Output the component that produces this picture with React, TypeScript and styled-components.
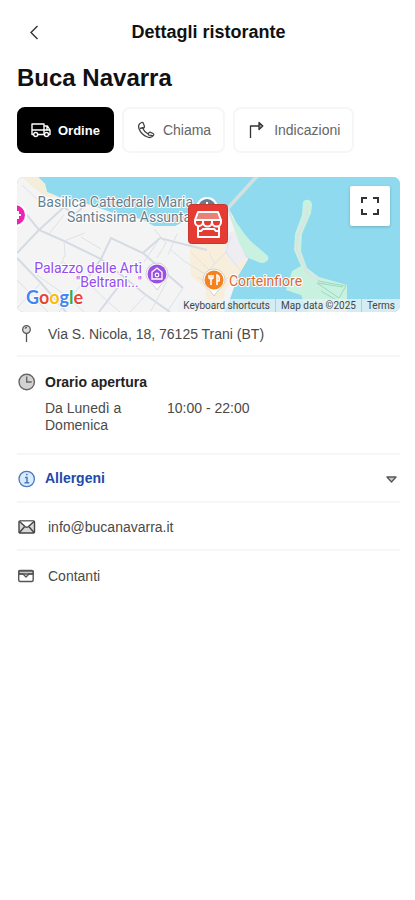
import React from "react";
import styled, { createGlobalStyle } from "styled-components";

const GlobalStyle = createGlobalStyle`
  *, *::before, *::after { box-sizing: border-box; }
  body {
    margin: 0;
    background: #fff;
    color: #4a4a4a;
    font-family: "Liberation Sans", Arial, sans-serif;
    font-size: 14px;
    line-height: 17px;
  }
  button { font: inherit; color: inherit; cursor: pointer; }
  a { color: inherit; text-decoration: none; }
`;

const Page = styled.main`
  padding: 0 15px 32px 17px;
`;

const TopBar = styled.header`
  display: grid;
  grid-template-columns: 34px 1fr 34px;
  align-items: center;
  height: 64px;
`;

const BackButton = styled.button`
  display: flex;
  align-items: center;
  justify-content: center;
  height: 34px;
  padding: 0;
  border: 0;
  background: none;
`;

const ScreenTitle = styled.h1`
  margin: 0;
  color: #111;
  font-size: 18px;
  line-height: 24px;
  text-align: center;
`;

const RestaurantName = styled.h2`
  margin: 0;
  color: #111;
  font-size: 24px;
  line-height: 28px;
`;

const Actions = styled.nav`
  display: flex;
  gap: 8px;
  margin: 15px 0 24px;
`;

const ActionButton = styled.button<{ $primary?: boolean }>`
  display: flex;
  align-items: center;
  gap: 7px;
  height: 46px;
  padding: 0 12px;
  border: 2px solid ${(p) => (p.$primary ? "#000" : "#f6f6f6")};
  border-radius: 8px;
  background: ${(p) => (p.$primary ? "#000" : "#fff")};
  color: ${(p) => (p.$primary ? "#fff" : "#666")};
  font-size: ${(p) => (p.$primary ? 13 : 14)}px;
  font-weight: ${(p) => (p.$primary ? 700 : 400)};
`;

const MapFrame = styled.section`
  position: relative;
  height: 135px;
  overflow: hidden;
  border-radius: 7px;
  background: #8fdaee;
`;

const MapDrawing = styled.svg`
  display: block;
  width: 100%;
  height: 100%;
  font-family: Roboto, sans-serif;
`;

const FullscreenButton = styled.button`
  position: absolute;
  top: 9px;
  right: 10px;
  display: flex;
  align-items: center;
  justify-content: center;
  width: 40px;
  height: 40px;
  padding: 0;
  border: 0;
  border-radius: 2px;
  background: #fff;
  box-shadow: 0 1px 3px rgba(0, 0, 0, 0.2);
`;

const MapLegal = styled.div`
  position: absolute;
  right: 0;
  bottom: 0;
  display: flex;
  gap: 1px;
  color: #444;
  font-family: Roboto, sans-serif;
  font-size: 10px;
  line-height: 13px;
`;

const LegalItem = styled.span`
  padding: 0 5px;
  background: rgba(238, 243, 245, 0.72);

  button {
    padding: 0;
    border: 0;
    background: none;
  }
`;

const Row = styled.section<{ $height: number }>`
  display: grid;
  grid-template-columns: 20px 1fr auto;
  column-gap: 8px;
  align-items: center;
  height: ${(p) => p.$height}px;
  padding-top: 2px;
  border-bottom: 2px solid #f6f6f6;

  &:last-child { border-bottom: 0; }
`;

const RowText = styled.span`
  padding-left: 3px;
`;

const Hours = styled.section`
  display: grid;
  grid-template-columns: 20px 1fr;
  column-gap: 8px;
  row-gap: 8px;
  align-items: center;
  padding: 15px 0 19px;
  border-bottom: 2px solid #f6f6f6;
`;

const SectionTitle = styled.h3`
  margin: 0;
  color: #222;
  font-size: 14px;
  line-height: 17px;
`;

const HoursList = styled.dl`
  display: grid;
  grid-column: 2;
  grid-template-columns: 106px 1fr;
  column-gap: 16px;
  margin: 0;

  dd { margin: 0; }
`;

const AllergenButton = styled.button`
  display: grid;
  grid-template-columns: 20px 1fr 16px;
  column-gap: 8px;
  align-items: center;
  width: 100%;
  height: 48px;
  padding: 0;
  border: 0;
  border-bottom: 2px solid #f6f6f6;
  background: none;
  color: #1f49ad;
  font-weight: 700;
  text-align: left;
`;

const TruckIcon = () => (
  <svg width="20" height="16" viewBox="0 0 20 16" fill="none" stroke="#fff" strokeWidth="1.4" strokeLinejoin="round" aria-hidden="true">
    <path d="M2.500 12.500H1V2h12v10.500H7M1 8h12M13 4h3.500L19 8v4.500h-1.500M13 8h6M16 4v4" />
    <circle cx="4.700" cy="12.500" r="2" />
    <circle cx="15.500" cy="12.500" r="2" />
  </svg>
);

const PhoneIcon = () => (
  <svg width="20" height="20" viewBox="0 0 20 20" fill="none" stroke="#444" strokeWidth="1.300" strokeLinejoin="round" aria-hidden="true">
    <path d="M5.500 2.500C3 3.700 2 6 3 8.700c1.500 4 4.500 6.800 8.500 8.300 2.700 1 5 .2 6.200-2 .3-.7 0-1.200-.6-1.500l-2.600-1.200c-.6-.2-1.200 0-1.600.5l-.9 1.100c-2.500-1.200-4-2.800-5-5.200l1-1c.5-.4.6-1 .4-1.600L7.300 3.100C7 2.500 6.300 2.200 5.500 2.500ZM4 8.500l3.600-1M12 13.900l.9 1.300 3.800.5" />
  </svg>
);

const DirectionsIcon = () => (
  <svg width="20" height="20" viewBox="0 0 20 20" fill="none" stroke="#333" strokeWidth="1.300" strokeLinejoin="round" aria-hidden="true">
    <path d="M3.500 18V6H12" />
    <path d="M12 2.500 15.800 6 12 9.500Z" fill="#999" />
  </svg>
);

const PinIcon = () => (
  <svg width="20" height="20" viewBox="0 0 20 20" fill="none" stroke="#555" strokeWidth="1.300" aria-hidden="true">
    <circle cx="9.500" cy="4.500" r="3.800" fill="#ddd" />
    <path d="M8 3.500c.5-.8 1.200-1 2-.8M9.500 8.500V17" />
  </svg>
);

const ClockIcon = () => (
  <svg width="20" height="20" viewBox="0 0 20 20" fill="none" stroke="#666" strokeWidth="1.400" aria-hidden="true">
    <circle cx="9.700" cy="10" r="7.700" fill="#d2d2d2" />
    <path d="M9.700 4.500V10h5" />
  </svg>
);

const InfoIcon = () => (
  <svg width="20" height="20" viewBox="0 0 20 20" fill="none" stroke="#4b78bc" strokeWidth="1.300" aria-hidden="true">
    <circle cx="9.700" cy="11" r="7.700" fill="#d7edff" />
    <path d="M8 9.500h2v5M7.500 14.700h4.700M9 6.500h1.600" strokeWidth="1.500" />
  </svg>
);

const MailIcon = () => (
  <svg width="20" height="20" viewBox="0 0 20 20" fill="none" stroke="#444" strokeWidth="1.400" strokeLinejoin="round" aria-hidden="true">
    <rect x="2" y="4" width="15.500" height="12" rx="1" fill="#d8d8d8" />
    <path d="m2.500 4.500 5.800 5.200c.9.700 2 .7 2.900 0L17 4.500" fill="#fff" />
    <path d="m2.500 15.500 5-5.800M17 15.500l-5-5.800" />
  </svg>
);

const WalletIcon = () => (
  <svg width="20" height="20" viewBox="0 0 20 20" fill="none" stroke="#555" strokeWidth="1.400" strokeLinejoin="round" aria-hidden="true">
    <rect x="1.700" y="4.500" width="14.500" height="11" rx="1.500" fill="#fff" />
    <path d="M2 5h14v3H2z" fill="#ccc" />
    <path d="M2 8h4l3 3 3-3h4" />
  </svg>
);

const MapArt = () => (
  <MapDrawing viewBox="0 0 383 135" preserveAspectRatio="xMidYMid slice" role="img" aria-label="Mappa di Trani">
    <rect width="383" height="135" fill="#8fdaee" />
    <path d="M0 0H21L28 7 30 15 42 20 74 28 99 37 124 42 137 49 158 49 172 42 194 38 211 30 218 43 225 68 231 82 221 99 213 122 207 135H0Z" fill="#f4f4f5" />
    <path d="M5 0H21L28 7 30 15 42 20 48 22 28 19 17 11Z" fill="#f4edd9" />
    <path d="M172 61 207 62 214 80 231 82 221 99 208 112 205 135H190L188 111 174 99Z" fill="#f8eedc" />
    <path d="m210 55 7-1 13 27-14 8-9-14Z" fill="#eeedf2" />
    <g fill="none" stroke="#d5dbe3" strokeWidth="2">
      <path d="M0 26 22 53 47 64 84 82 108 101 129 118 153 135M22 53 0 76M22 53 47 30M47 30 57 38 65 31" />
      <path d="M84 82 94 61 126 76 151 98 166 111M84 82 72 99M126 76 143 61 158 65 190 73M108 101 82 135M0 81 24 106 49 135" />
    </g>
    <g fill="none" stroke="#dce1e7">
      <path d="M32 57 47 38M47 64 48 78 42 92M47 64 68 56M5 8 20 22M64 60 84 72M143 61 127 85M108 101 123 83M129 118 113 135M24 106 0 131M46 85 68 103 90 124 103 135M68 103 42 135M20 98 51 120 67 135M0 103 31 135M153 72 167 84 188 97M137 52 149 66 140 81M160 57 151 78M150 104 134 134M166 111 150 135" />
    </g>
    <path d="m174 75 18 18 17-18 15 19M191 93 204 109M192 76 198 87M180 100 197 109 218 97M209 75 214 59" fill="none" stroke="#e1e2e3" />
    <path d="m211 31 31-34" stroke="#bce4de" strokeWidth="4" />
    <path d="m211 31 31-34M211 31 220 57 230 80" fill="none" stroke="#d8dfe3" strokeWidth="2" />
    <path d="M213 38C221 45 227 59 237 67L251 79C253 84 247 86 244 86L231 81 222 66Z" fill="#c9f1df" />
    <path d="M286 25C289 21 295 23 295 28L294 36 285 57 284 74 290 91 302 100 330 108V135H291L284 118 269 113 275 94 284 89 277 73 278 57 285 38Z" fill="#c9f1df" />
    <path d="M290 28v10l-9 20-1 14 10 24 19 12" fill="none" stroke="#dde1e4" strokeWidth="2" />
    <path d="m301 104 28 5-7 12-22-15 26 4M304 114l17 10" fill="none" stroke="#9adbc0" />
    <g fontSize="14" stroke="#fff" strokeWidth="2" paintOrder="stroke" strokeLinejoin="round">
      <text x="176" y="30" fill="#667e8b" textAnchor="end">Basilica Cattedrale Maria</text>
      <text x="174" y="45" fill="#667e8b" textAnchor="end">Santissima Assunta</text>
      <text x="125" y="96" fill="#944cef" textAnchor="end">Palazzo delle Arti</text>
      <text x="125" y="110" fill="#944cef" textAnchor="end">"Beltrani..."</text>
      <text x="212" y="109" fill="#dd682e">Corteinfiore</text>
    </g>
    <circle cx="190" cy="31" r="11" fill="#fff" />
    <circle cx="190" cy="31" r="9" fill="#667f8c" />
    <path d="M190 25v7M187 28h6" stroke="#fff" strokeWidth="2" />
    <circle cx="-2" cy="38" r="12" fill="#fff" />
    <circle cx="-2" cy="38" r="10" fill="#ef23b3" />
    <path d="M-2 38h6M1 34v8" stroke="#fff" strokeWidth="2" />
    <path d="M129 97a11 11 0 1 1 22 0c0 6-6 8-11 16-5-8-11-10-11-16Z" fill="#fff" stroke="#d2cedb" />
    <circle cx="140" cy="97" r="9.500" fill="#9b51e0" />
    <path d="m135 95 5-4 5 4v7h-10Z" fill="none" stroke="#fff" strokeWidth="1.300" />
    <circle cx="140" cy="98" r="1.800" fill="none" stroke="#fff" strokeWidth="1.200" />
    <path d="M186 103a11 11 0 1 1 22 0c0 6-6 8-11 16-5-8-11-10-11-16Z" fill="#fff" stroke="#d6d1c8" />
    <circle cx="197" cy="103" r="9.500" fill="#f5821f" />
    <path d="M192 98v3q2 2 4 0v-3M194 98v10M200 108V98q3 1 2 6h-2" fill="none" stroke="#fff" strokeWidth="1.600" />
    <rect x="171.500" y="27.500" width="39" height="39" rx="3" fill="#e63b32" stroke="#c83630" />
    <g fill="none" stroke="#fff" strokeWidth="2" strokeLinejoin="round">
      <path d="M181 35h20l3 8H178Z" fill="#e88178" />
      <path d="M178 43v2a4 4 0 0 0 8 0 4.500 4.500 0 0 0 9 0 4.500 4.500 0 0 0 9 0v-2M186 43v2M195 43v2M181 49v11h21V49M181 54h3l2-2h11l2 2h3" />
    </g>
    <text x="9" y="127" fontFamily="Lato, sans-serif" fontSize="18" fontWeight="700" stroke="#fff" strokeWidth="2" paintOrder="stroke">
      <tspan fill="#4285f4">G</tspan><tspan fill="#ea4335">o</tspan><tspan fill="#fbbc05">o</tspan><tspan fill="#4285f4">g</tspan><tspan fill="#34a853">l</tspan><tspan fill="#ea4335">e</tspan>
    </text>
  </MapDrawing>
);

export default function App() {
  return (
    <>
      <GlobalStyle />
      <Page>
        <TopBar>
          <BackButton aria-label="Indietro">
            <svg width="12" height="16" viewBox="0 0 12 16" fill="none" stroke="#333" strokeWidth="1.400" aria-hidden="true">
              <path d="M9.500 2 3 8.500 9.500 15" />
            </svg>
          </BackButton>
          <ScreenTitle>Dettagli ristorante</ScreenTitle>
        </TopBar>
        <RestaurantName>Buca Navarra</RestaurantName>
        <Actions aria-label="Azioni">
          <ActionButton $primary><TruckIcon />Ordine</ActionButton>
          <ActionButton><PhoneIcon />Chiama</ActionButton>
          <ActionButton><DirectionsIcon />Indicazioni</ActionButton>
        </Actions>
        <MapFrame>
          <MapArt />
          <FullscreenButton aria-label="Schermo intero">
            <svg width="20" height="20" viewBox="0 0 20 20" fill="none" stroke="#333" strokeWidth="2" aria-hidden="true">
              <path d="M2 7V2h5M13 2h5v5M18 13v5h-5M7 18H2v-5" />
            </svg>
          </FullscreenButton>
          <MapLegal>
            <LegalItem><button>Keyboard shortcuts</button></LegalItem>
            <LegalItem>Map data ©2025</LegalItem>
            <LegalItem><a href="#terms">Terms</a></LegalItem>
          </MapLegal>
        </MapFrame>
        <Row $height={45}>
          <PinIcon />
          <RowText>Via S. Nicola, 18, 76125 Trani (BT)</RowText>
        </Row>
        <Hours>
          <ClockIcon />
          <SectionTitle>Orario apertura</SectionTitle>
          <HoursList>
            <dt>Da Lunedì a Domenica</dt>
            <dd>10:00 - 22:00</dd>
          </HoursList>
        </Hours>
        <AllergenButton aria-expanded="false">
          <InfoIcon />
          <span>Allergeni</span>
          <svg width="16" height="16" viewBox="0 0 16 16" fill="#ccc" stroke="#555" strokeWidth="1.300" strokeLinejoin="round" aria-hidden="true">
            <path d="M3 7h9l-4.500 5Z" />
          </svg>
        </AllergenButton>
        <Row $height={48}>
          <MailIcon />
          <RowText><a href="mailto:info@bucanavarra.it">info@bucanavarra.it</a></RowText>
        </Row>
        <Row $height={48}>
          <WalletIcon />
          <RowText>Contanti</RowText>
        </Row>
      </Page>
    </>
  );
}
